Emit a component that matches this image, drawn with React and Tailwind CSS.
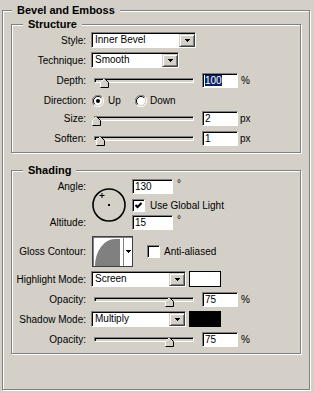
import React from 'react'

// classic win32 sunken field edge
const sunken = 'border border-t-[#808080] border-l-[#808080] border-b-white border-r-white shadow-[inset_1px_1px_0_#000]'
const raised = 'border border-t-[#d4d0c8] border-l-[#d4d0c8] border-b-[#404040] border-r-[#404040] shadow-[inset_1px_1px_0_#fff,inset_-1px_-1px_0_#808080]'

function GroupBox({ title, titleClass, className, children }) {
  return (
    <div className={`relative border border-[#808080] shadow-[1px_1px_0_#fff,inset_1px_1px_0_#fff] ${className}`}>
      <span className={`absolute top-[-7px] bg-[#d4d0c8] px-[5px] text-[11px] font-bold leading-[13px] ${titleClass}`}>
        {title}
      </span>
      {children}
    </div>
  )
}

function Label({ children }) {
  return <span className="w-[74px] shrink-0 text-right leading-[13px]">{children}</span>
}

function Arrow() {
  return (
    <svg width="5" height="3" className="block">
      <rect x="0" y="0" width="5" height="1" fill="#000" />
      <rect x="1" y="1" width="3" height="1" fill="#000" />
      <rect x="2" y="2" width="1" height="1" fill="#000" />
    </svg>
  )
}

function Select({ value, className }) {
  return (
    <div className={`h-[16px] flex bg-white ${sunken} ${className}`}>
      <span className="flex-1 pl-[3px] leading-[14px]">{value}</span>
      <span className={`self-end w-[16px] h-[13px] flex items-center justify-center bg-[#d4d0c8] ${raised}`}>
        <Arrow />
      </span>
    </div>
  )
}

function NumInput({ value, selected, className }) {
  return (
    <div className={`h-[15px] flex items-center pl-[2px] bg-white ${sunken} ${className}`}>
      {selected
        ? <span className="bg-[#0a246a] text-white leading-[11px]">{value}</span>
        : <span className="leading-[13px]">{value}</span>}
    </div>
  )
}

function Thumb() {
  return (
    <svg width="9" height="10" className="block">
      <path d="M4.5 0.5 L8.5 4.5 V9.5 H0.5 V4.5 Z" fill="#d4d0c8" />
      <path d="M0.5 9.5 V4.5 L4.5 0.5" fill="none" stroke="#fff" />
      <path d="M4.5 0.5 L8.5 4.5 V9.5 H0.5" fill="none" stroke="#000" />
    </svg>
  )
}

function Slider({ thumbClass, className }) {
  return (
    <div className={`relative w-[100px] h-[5px] bg-[#d4d0c8] border border-t-[#808080] border-l-[#808080] border-b-white border-r-white shadow-[inset_1px_1px_0_#000] ${className}`}>
      <span className={`absolute top-[-1px] ${thumbClass}`}>
        <Thumb />
      </span>
    </div>
  )
}

function Radio({ checked }) {
  return (
    <svg width="12" height="12" className="block shrink-0">
      <circle cx="6" cy="6" r="4.5" fill="#fff" />
      <path d="M1.9 10.1 A5.5 5.5 0 0 1 10.1 1.9" fill="none" stroke="#808080" />
      <path d="M10.1 1.9 A5.5 5.5 0 0 1 1.9 10.1" fill="none" stroke="#fff" />
      <path d="M2.8 9.2 A4.5 4.5 0 0 1 9.2 2.8" fill="none" stroke="#000" />
      <path d="M9.2 2.8 A4.5 4.5 0 0 1 2.8 9.2" fill="none" stroke="#d4d0c8" />
      {checked && <circle cx="6" cy="6" r="2" fill="#000" />}
    </svg>
  )
}

function Checkbox({ checked }) {
  return (
    <div className={`w-[13px] h-[13px] shrink-0 flex items-center justify-center bg-white ${sunken}`}>
      {checked && (
        <svg width="7" height="7" className="block">
          <polyline points="0.5,3 2.5,5 6.5,1" fill="none" stroke="#000" strokeWidth="2" />
        </svg>
      )}
    </div>
  )
}

function AngleDial({ className }) {
  return (
    <svg width="34" height="34" className={`block shrink-0 ${className}`}>
      <circle cx="17" cy="17" r="16" fill="none" stroke="#000" strokeWidth="1.6" />
      <rect x="16" y="16" width="2" height="2" fill="#000" />
      <path d="M7.5 7.5 H12.5 M10 5 V10" stroke="#000" strokeWidth="1" />
    </svg>
  )
}

function ContourBox({ className }) {
  return (
    <div className={`h-[31px] w-[41px] flex bg-white border border-[#404040] shadow-[inset_1px_1px_0_#808080] ${className}`}>
      <svg width="29" height="28" className="block mt-[1px] ml-[1px]">
        <rect width="29" height="28" fill="#fff" />
        <path d="M1 28 A20 27 0 0 1 21 1 L26 1 L26 28 Z" fill="#808080" />
      </svg>
      <div className="flex-1 flex items-center justify-center border-l border-[#808080]">
        <Arrow />
      </div>
    </div>
  )
}

export default function App() {
  return (
    <div className="w-[314px] h-[393px] bg-[#d4d0c8] pt-[10px] pl-[2px] font-['Liberation_Sans',Arial,sans-serif] text-[10px] text-black select-none">
      <GroupBox title="Bevel and Emboss" titleClass="left-[9px]" className="w-[308px] h-[380px] pt-[13px] px-[8px]">
        <GroupBox title="Structure" titleClass="left-[11px]" className="h-[129px] pt-[7px]">
          <div className="flex items-center">
            <Label>Style:</Label>
            <Select value="Inner Bevel" className="ml-[5px] w-[105px]" />
          </div>
          <div className="flex items-center mt-[4px]">
            <Label>Technique:</Label>
            <Select value="Smooth" className="ml-[5px] w-[88px]" />
          </div>
          <div className="flex items-center mt-[5px]">
            <Label>Depth:</Label>
            <Slider className="ml-[8px]" thumbClass="left-[5px]" />
            <NumInput value="100" selected className="ml-[8px] w-[36px]" />
            <span className="ml-[3px]">%</span>
          </div>
          <div className="flex items-center mt-[6px] h-[13px]">
            <Label>Direction:</Label>
            <span className="ml-[6px]"><Radio checked /></span>
            <span className="ml-[4px] w-[27px]">Up</span>
            <Radio />
            <span className="ml-[3px]">Down</span>
          </div>
          <div className="flex items-center mt-[4px]">
            <Label>Size:</Label>
            <Slider className="ml-[8px]" thumbClass="left-[-3px]" />
            <NumInput value="2" className="ml-[8px] w-[36px]" />
            <span className="ml-[2px]">px</span>
          </div>
          <div className="flex items-center mt-[5px]">
            <Label>Soften:</Label>
            <Slider className="ml-[8px]" thumbClass="left-[1px]" />
            <NumInput value="1" className="ml-[8px] w-[36px]" />
            <span className="ml-[2px]">px</span>
          </div>
        </GroupBox>

        <GroupBox title="Shading" titleClass="left-[11px]" className="mt-[17px] h-[184px] pt-[8px]">
          <div className="flex">
            <div className="w-[74px] shrink-0 flex flex-col justify-between text-right">
              <span className="leading-[15px]">Angle:</span>
              <span className="leading-[15px]">Altitude:</span>
            </div>
            <AngleDial className="ml-[6px] self-center" />
            <div className="ml-[6px] flex flex-col">
              <div className="flex">
                <NumInput value="130" className="w-[41px]" />
                <span className="ml-[4px] leading-[10px]">°</span>
              </div>
              <div className="flex items-center mt-[5px] h-[13px]">
                <Checkbox checked />
                <span className="ml-[5px]">Use Global Light</span>
              </div>
              <div className="flex mt-[3px]">
                <NumInput value="15" className="w-[41px]" />
                <span className="ml-[4px] leading-[10px]">°</span>
              </div>
            </div>
          </div>
          <div className="flex items-center mt-[6px]">
            <Label>Gloss Contour:</Label>
            <ContourBox className="ml-[6px]" />
            <span className="ml-[14px]"><Checkbox /></span>
            <span className="ml-[4px]">Anti-aliased</span>
          </div>
          <div className="flex items-center mt-[4px]">
            <Label>Highlight Mode:</Label>
            <Select value="Screen" className="ml-[5px] w-[95px]" />
            <span className="ml-[3px] w-[32px] h-[16px] bg-white border border-black" />
          </div>
          <div className="flex items-center mt-[5px]">
            <Label>Opacity:</Label>
            <Slider className="ml-[8px]" thumbClass="left-[70px]" />
            <NumInput value="75" className="ml-[8px] w-[36px]" />
            <span className="ml-[3px]">%</span>
          </div>
          <div className="flex items-center mt-[4px]">
            <Label>Shadow Mode:</Label>
            <Select value="Multiply" className="ml-[5px] w-[95px]" />
            <span className="ml-[3px] w-[32px] h-[16px] bg-black" />
          </div>
          <div className="flex items-center mt-[5px]">
            <Label>Opacity:</Label>
            <Slider className="ml-[8px]" thumbClass="left-[70px]" />
            <NumInput value="75" className="ml-[8px] w-[36px]" />
            <span className="ml-[3px]">%</span>
          </div>
        </GroupBox>
      </GroupBox>
    </div>
  )
}
